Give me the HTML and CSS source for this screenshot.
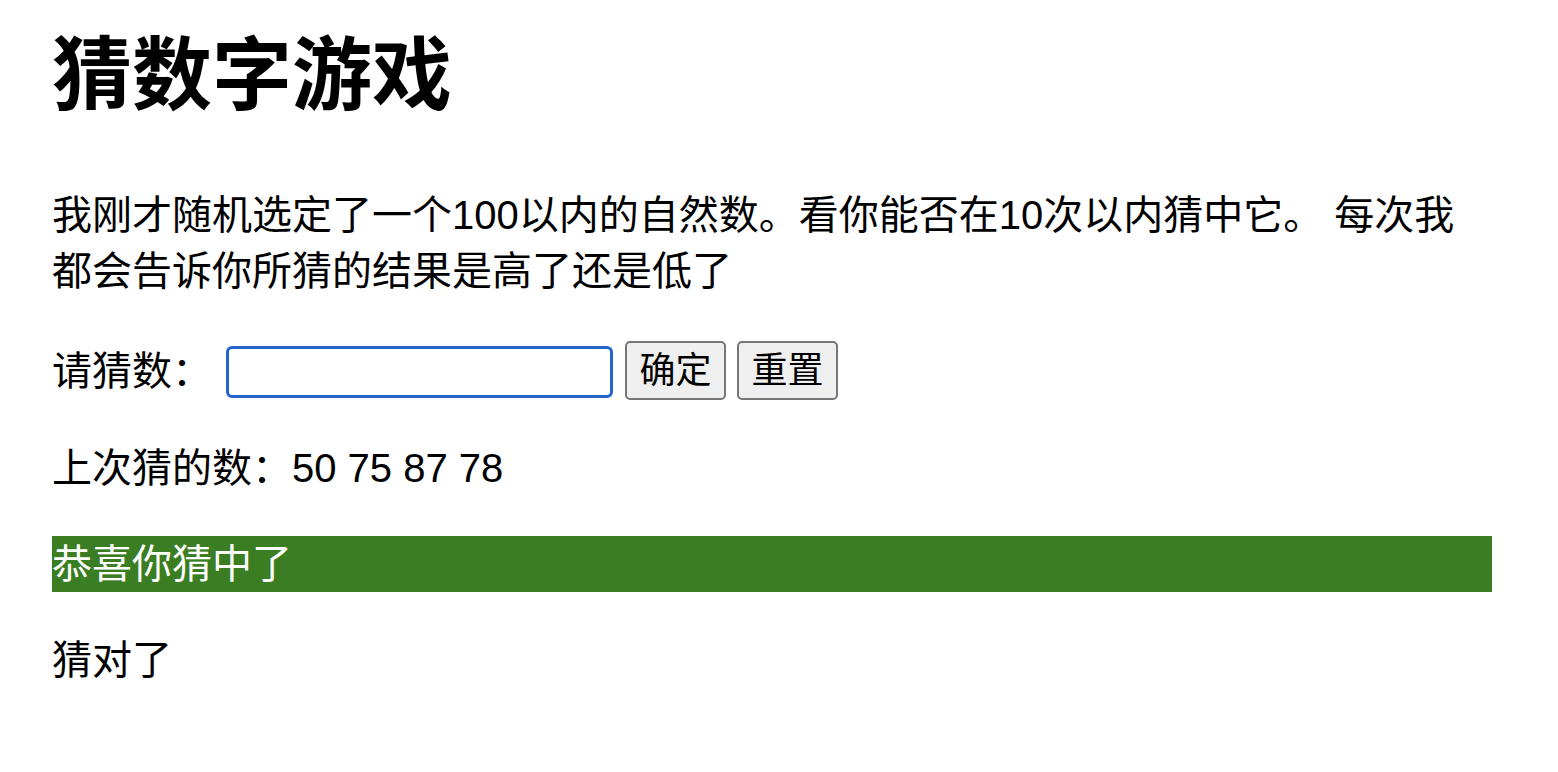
FILE: index.html
```html
<!DOCTYPE html>
<html lang="zh-CN">
<head>
<meta charset="utf-8">
<title>猜数字游戏</title>
<link rel="stylesheet" href="styles.css">
</head>
<body>
<h1 class="title">猜数字游戏</h1>
<p class="intro">我刚才随机选定了一个100以内的自然数。看你能否在10次以内猜中它。 每次我都会告诉你所猜的结果是高了还是低了</p>
<div class="form">
  <label class="label" for="guessField">请猜数：</label>
  <input class="field" id="guessField" type="text">
  <button class="btn" type="button">确定</button>
  <button class="btn" type="button">重置</button>
</div>
<p class="guesses">上次猜的数：50 75 87 78</p>
<p class="result">恭喜你猜中了</p>
<p class="hint">猜对了</p>
</body>
</html>
```
FILE: styles.css
```css
html, body {
  background: #ffffff;
}
body {
  margin: 0;
  padding: 20px 0 0 52px;
  width: 1440px;
  font-family: "Liberation Sans", "Noto Sans CJK SC", sans-serif;
  font-size: 40px;
  line-height: 56px;
  color: #000000;
}
.title {
  margin: 0 0 55px;
  font-size: 80px;
  line-height: 112px;
  font-weight: 700;
}
.intro {
  margin: 0 0 40px;
}
.form {
  display: flex;
  align-items: center;
  height: 61px;
  margin: 0 0 40px;
}
.label {
  width: 174px;
  margin-top: 2px;
}
.field {
  box-sizing: border-box;
  width: 387px;
  height: 52px;
  border: 3px solid #2563c8;
  border-radius: 6px;
  outline: none;
  padding: 0 6px;
  font: 36px "Liberation Sans", "Noto Sans CJK SC", sans-serif;
  background: #ffffff;
  margin: 4px 12px 0 0;
}
.btn {
  box-sizing: border-box;
  width: 101px;
  height: 59px;
  padding: 2px 0 0;
  border: 2px solid #767676;
  border-radius: 5px;
  background: #efefef;
  color: #000000;
  font: 36px/50px "Liberation Sans", "Noto Sans CJK SC", sans-serif;
  margin: 1px 11px 0 0;
}
.guesses {
  margin: 0 0 40px;
}
.result {
  margin: 0 0 40px;
  background: #3a7d23;
  color: #ffffff;
}
.hint {
  margin: 0;
}
```
